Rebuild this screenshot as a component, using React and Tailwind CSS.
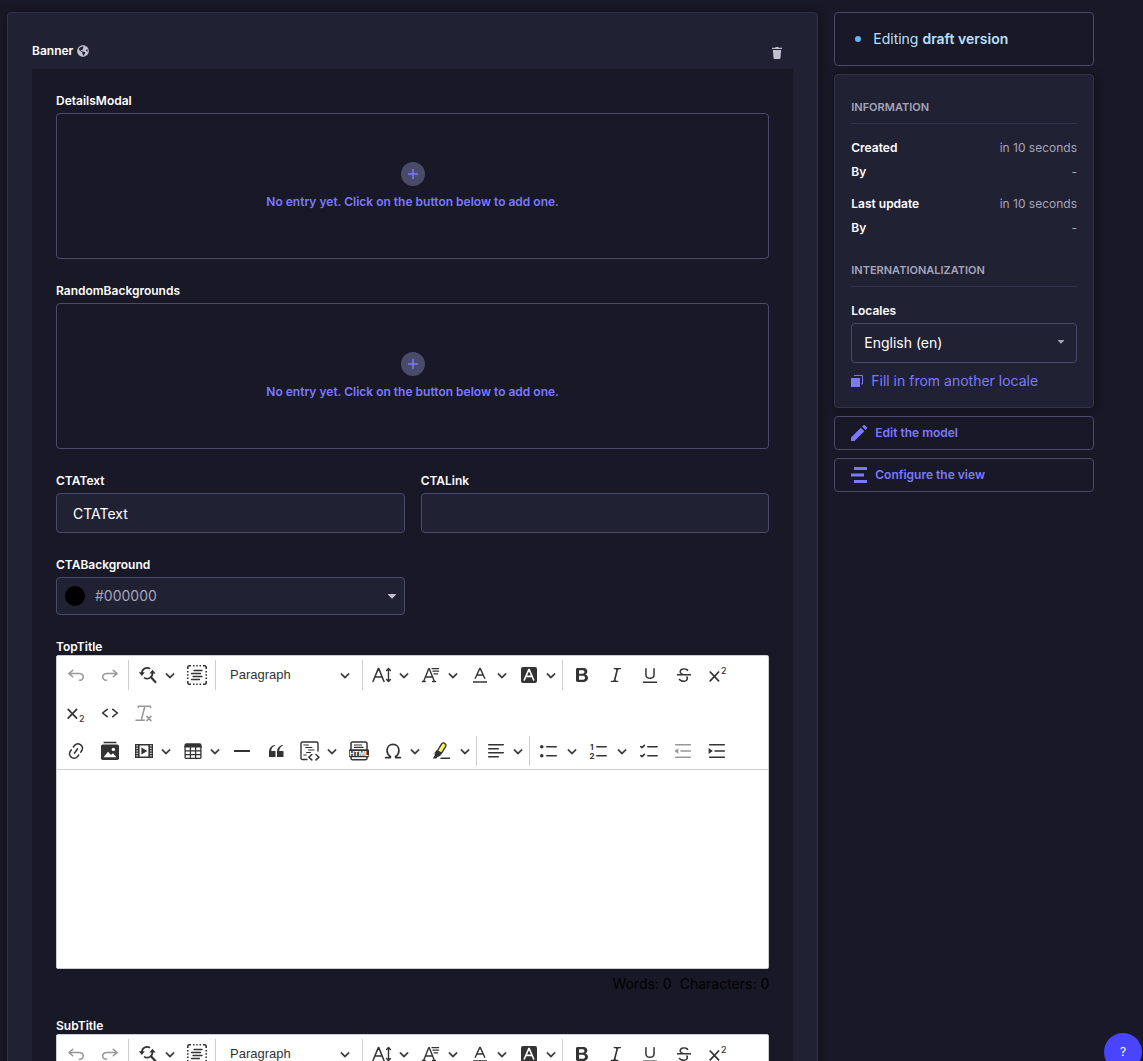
import React, { useId } from "react";
import { FaGlobeAmericas } from "react-icons/fa";

/* ---------- toolbar icons (20 x 20 grid) ---------- */

function Icon({ children }) {
  return (
    <svg viewBox="0 0 20 20" className="size-5 shrink-0" fill="currentColor" aria-hidden="true">
      {children}
    </svg>
  );
}

const line = { fill: "none", stroke: "currentColor", strokeWidth: 1.5, strokeLinecap: "round", strokeLinejoin: "round" };

const icons = {
  undo: <path d="m5.042 9.367 2.189 1.837a.75.75 0 0 1-.965 1.149l-3.788-3.18a.747.747 0 0 1-.21-.284.75.75 0 0 1 .17-.945L6.23 4.762a.75.75 0 1 1 .964 1.15L4.863 7.866h8.917A.75.75 0 0 1 14 7.9a4 4 0 1 1-1.477 7.718l.344-1.489a2.5 2.5 0 1 0 1.094-4.73l.008-.032H5.042z" />,
  redo: <path d="m14.958 9.367-2.189 1.837a.75.75 0 0 0 .965 1.149l3.788-3.18a.747.747 0 0 0 .21-.284.75.75 0 0 0-.17-.945L13.77 4.762a.75.75 0 1 0-.964 1.15l2.331 1.955H6.22A.75.75 0 0 0 6 7.9a4 4 0 1 0 1.477 7.718l-.344-1.489A2.5 2.5 0 1 1 6.039 9.4l-.008-.032h8.927z" />,
  find: (
    <g>
      <path {...line} strokeWidth="1.7" strokeLinecap="butt" d="M3.9 8.4a5.300 5.300 0 0 1 8.200-4.700M14.400 7.600a5.300 5.300 0 0 1-8.400 5" />
      <path {...line} strokeWidth="2.200" d="m13.700 12.900 3.700 4.200" />
      <path d="M.8 7.200h6L3.900 10.900zM11.400 8.600h6.200L14.500 4.800z" />
    </g>
  ),
  selectAll: (
    <g fill="none" stroke="currentColor">
      <path d="M.800 4V2.300A1.500 1.500 0 0 1 2.300.800H4M16 .800h1.700a1.500 1.500 0 0 1 1.500 1.500V4M19.200 16v1.700a1.500 1.500 0 0 1-1.500 1.500H16M4 19.200H2.300a1.500 1.500 0 0 1-1.500-1.500V16" strokeWidth="1.600" />
      <path d="M6 .800h1.500M9.250.800h1.500M12.500.800H14M6 19.200h1.500M9.250 19.200h1.500M12.500 19.200H14M.800 6v1.500M.800 9.250v1.500M.800 12.500V14M19.200 6v1.500M19.200 9.250v1.500M19.200 12.500V14" strokeWidth="1.600" />
      <path d="M7 5.500h8M4.500 8.500h9M6 11.500h9M4.500 14.500h8" strokeWidth="1.300" strokeLinecap="round" />
    </g>
  ),
  fontSize: (
    <g {...line} strokeWidth="1.5">
      <path d="M1 16.500 6.300 3.600h.5L12 16.500M3 12h7.200" />
      <path d="M16.500 4v12M14.600 5.400l1.900-2 1.900 2M14.600 14.600l1.900 2 1.900-2" strokeWidth="1.400" />
    </g>
  ),
  fontFamily: (
    <g {...line} strokeWidth="1.4">
      <path d="M2.600 16.400 7.800 3.600h.4l5.200 12.800M4.400 12h7.400M1.400 16.500h2.800M11.600 16.500h2.800" />
      <path d="M11 3.600h6.600M12 6.200h5.600M13 8.800h3.600" strokeWidth="1.3" />
    </g>
  ),
  fontColor: (
    <g {...line} strokeWidth="1.4">
      <path d="M5.300 13.300 9.800 3.400h.4l4.500 9.900M6.900 10h6.200" />
      <path d="M3 17h14" strokeWidth="1.5" strokeLinecap="butt" />
    </g>
  ),
  fontBackground: (
    <g>
      <rect x="2" y="2" width="16" height="16" rx="2" />
      <path d="M5.300 15 9.800 4.600h.4L14.700 15M6.900 11.400h6.200" fill="none" stroke="#fff" strokeWidth="1.6" strokeLinecap="round" />
    </g>
  ),
  bold: <path d="M10.187 17H5.773c-.637 0-1.092-.138-1.364-.415-.273-.277-.409-.718-.409-1.323V4.738c0-.617.14-1.062.419-1.332.279-.27.73-.406 1.354-.406h4.68c.69 0 1.288.041 1.793.124.506.083.96.242 1.36.478.341.197.644.447.906.75a3.262 3.262 0 0 1 .808 2.162c0 1.401-.722 2.426-2.167 3.075C15.05 10.175 16 11.315 16 13.01a3.756 3.756 0 0 1-2.296 3.504 6.1 6.1 0 0 1-1.517.377c-.571.073-1.238.11-2 .11zm-.217-6.217H7v4.087h3.069c1.977 0 2.965-.69 2.965-2.072 0-.707-.256-1.22-.768-1.537-.512-.319-1.277-.478-2.296-.478zM7 5.13v3.619h2.606c.729 0 1.292-.067 1.69-.2a1.6 1.6 0 0 0 .91-.765c.165-.267.247-.566.247-.897 0-.707-.26-1.176-.778-1.409-.519-.232-1.31-.348-2.375-.348H7z" />,
  italic: <path d="m9.586 14.633.021.004c-.036.335.095.655.393.962.082.083.173.15.274.201h1.474a.6.6 0 1 1 0 1.2H5.304a.6.6 0 0 1 0-1.2h1.15c.474-.07.809-.182 1.005-.334.157-.122.291-.32.404-.597l2.416-9.55a1.053 1.053 0 0 0-.281-.823 1.12 1.12 0 0 0-.442-.296H8.15a.6.6 0 0 1 0-1.2h6.443a.6.6 0 1 1 0 1.2h-1.195c-.376.056-.65.155-.823.296-.215.175-.423.439-.623.79l-2.366 9.347z" />,
  underline: <path d="M3 18v-1.500h14V18zm2.200-8V3.600c0-.4.4-.6.8-.6.3 0 .7.2.7.6v6.200c0 2 1.300 2.800 3.200 2.800 1.900 0 3.400-.9 3.400-2.900V3.600c0-.3.4-.5.8-.5.3 0 .7.2.7.5V10c0 2.700-2.200 4-4.900 4-2.600 0-4.700-1.200-4.700-4z" />,
  strike: (
    <g>
      <path d="M7 16.4c-.8-.4-1.5-.9-2.2-1.5a.6.6 0 0 1-.2-.5l.3-.6h1c1 1.2 2.1 1.7 3.7 1.7 1 0 1.8-.3 2.3-.6.6-.4.6-1.2.6-1.3.2-1.2-.9-2.1-.9-2.1h2.1c.3.7.4 1.2.4 1.7v.8l-.6 1.2c-.6.8-1.1 1-1.6 1.2a6 6 0 0 1-2.4.6c-1 0-1.8-.3-2.5-.6zM6.8 9 6 8.3c-.4-.5-.5-.8-.5-1.6 0-.7.1-1.3.5-1.8.4-.6 1-1 1.6-1.3a6.3 6.3 0 0 1 4.7 0 4 4 0 0 1 1.7 1l.3.7c0 .1.2.4-.2.7-.4.2-.9.1-1 0a3 3 0 0 0-1.2-1c-.4-.2-1-.3-2-.4-.7 0-1.4.2-2 .6-.8.6-1 .8-1 1.5 0 .8.5 1 1.2 1.5.6.4 1.1.7 1.9 1H6.800z" />
      <path d="M3 10.500V9h14v1.500z" />
    </g>
  ),
  superscript: (
    <g>
      <path d="m2.200 7 8.400 8.800M10.600 7l-8.400 8.800" fill="none" stroke="currentColor" strokeWidth="1.700" strokeLinecap="round" />
      <text x="13" y="9" fontSize="9" fontWeight="500" fontFamily="Inter, sans-serif">2</text>
    </g>
  ),
  subscript: (
    <g>
      <path d="m2.200 6.400 8.400 8.800M10.600 6.400l-8.400 8.800" fill="none" stroke="currentColor" strokeWidth="1.700" strokeLinecap="round" />
      <text x="13" y="18.500" fontSize="9" fontWeight="500" fontFamily="Inter, sans-serif">2</text>
    </g>
  ),
  source: (
    <g {...line} strokeWidth="1.600">
      <path d="M7.200 6.300 2.600 10l4.600 3.700M12.800 6.300l4.600 3.700-4.600 3.700" />
    </g>
  ),
  removeFormat: (
    <g {...line} strokeWidth="1.500">
      <path d="M4.300 3.200h12.200M4.300 3.200v1.400M16.500 3.200v1.400M10.900 3.200 7.600 16M2 17.200h8.300" />
      <path d="m12.900 13.400 4 4.200M16.900 13.400l-4 4.200" strokeWidth="1.600" />
    </g>
  ),
  link: <path d="m11.077 15 .991-1.416a.75.75 0 1 1 1.229.86l-1.148 1.64a.748.748 0 0 1-.217.206 5.251 5.251 0 0 1-8.503-5.955.741.741 0 0 1 .12-.274l1.147-1.639a.75.75 0 1 1 1.228.86L4.933 10.7l.006.003a3.75 3.75 0 0 0 6.132 4.294l.006.004zm5.494-5.335a.748.748 0 0 1-.12.274l-1.147 1.639a.75.75 0 1 1-1.228-.86l.86-1.23a3.75 3.75 0 0 0-6.144-4.301l-.86 1.229a.75.75 0 0 1-1.229-.86l1.148-1.64a.748.748 0 0 1 .217-.206 5.251 5.251 0 0 1 8.503 5.955zm-4.563-2.532a.75.75 0 0 1 .184 1.045l-3.155 4.505a.75.75 0 1 1-1.229-.86l3.155-4.506a.75.75 0 0 1 1.045-.184z" />,
  media: (
    <g>
      <path d="M3.600.8h12.800v1.400H3.600z" />
      <rect x="1" y="3.400" width="18" height="15.600" rx="1.800" />
      <path d="m3.600 16.200 4.400-5.400 3 3.200 2-1.800 3.400 4z" fill="#fff" />
      <circle cx="13.400" cy="8.400" r="1.700" fill="#fff" />
    </g>
  ),
  video: (
    <g>
      <path fillRule="evenodd" d="M1 3h18v14H1zm4.600 1.600v10.800h8.800V4.600z" />
      <path d="M3.100 4.300v12M16.900 4.300v12" stroke="#fff" strokeWidth="1.400" strokeDasharray="1.300 1.200" />
      <path d="M7.400 6.500v7l6-3.500z" />
    </g>
  ),
  table: (
    <g>
      <path d="M1.400 4.200a2 2 0 0 1 2-2h13.200a2 2 0 0 1 2 2V6.500H1.400z" />
      <path d="M2.100 5v11.400a1 1 0 0 0 1 1h13.800a1 1 0 0 0 1-1V5M2 9.800h16M2 13.600h16M7.400 6v11.400M12.600 6v11.400" fill="none" stroke="currentColor" strokeWidth="1.300" />
    </g>
  ),
  hr: <path d="M2 9h16v2H2z" />,
  quote: <path d="M3 10.423a6.5 6.5 0 0 1 6.056-6.408l.038.67C6.448 5.423 5.354 7.663 5.22 10H9c.552 0 .5.432.5.986v4.511c0 .554-.448.503-1 .503h-5c-.552 0-.5-.449-.5-1.003v-4.574zm8 0a6.5 6.5 0 0 1 6.056-6.408l.038.67c-2.646.739-3.74 2.979-3.873 5.315H17c.552 0 .5.432.5.986v4.511c0 .554-.448.503-1 .503h-5c-.552 0-.5-.449-.5-1.003v-4.574z" />,
  codeBlock: (
    <g {...line} strokeWidth="1.400">
      <path d="M7 18.500H2.300A1.300 1.300 0 0 1 1 17.200V2.300A1.300 1.300 0 0 1 2.300 1h14.400a1.300 1.300 0 0 1 1.300 1.300V10" />
      <path d="M3.800 4h4.500M5.800 6.500h6M8.500 9h5.500M6.500 11.500h4M3.800 14h2.500" strokeWidth="1.200" />
      <path d="m11.800 13.500-3 2.700 3 2.700M16 13.500l3 2.700-3 2.700" strokeWidth="1.500" />
    </g>
  ),
  html: (
    <g>
      <path d="M2 9V2.600A1.600 1.600 0 0 1 3.600 1h12.800A1.600 1.600 0 0 1 18 2.600V9M2 15.500v1.700a1.600 1.600 0 0 0 1.600 1.600h12.800a1.600 1.600 0 0 0 1.600-1.600v-1.700" fill="none" stroke="currentColor" strokeWidth="1.500" />
      <path d="M5 4h8M5 6.300h9.500" stroke="currentColor" strokeWidth="1.200" />
      <rect x="0" y="8.300" width="20" height="8" rx="1.200" />
      <text x="10" y="14.700" textAnchor="middle" fontSize="6.500" fontWeight="800" fill="#fff" fontFamily="Inter, sans-serif">HTML</text>
    </g>
  ),
  omega: (
    <path {...line} strokeWidth="1.700" d="M2.600 16.600h4.800v-1.200c-2-1.200-3.300-3.200-3.300-5.700 0-3.700 2.500-6.300 5.900-6.300s5.900 2.600 5.900 6.300c0 2.500-1.300 4.500-3.300 5.700v1.200h4.800" />
  ),
  highlight: (
    <g>
      <path d="M9.700 2.800c.6-1 1.700-1.100 2.500-.6l1 .7c.8.500 1 1.500.5 2.400l-4.300 7-4-2.600z" fill="#fdf15c" stroke="currentColor" strokeWidth="1.400" />
      <path d="m4.500 9.300 5.200 3.300-1.600 2.500-2.600.8-1.100 1.700H.700l2-3.200-.2-2.400z" />
      <path d="M9 16.500h9V18H8z" />
    </g>
  ),
  align: <path {...line} d="M2.700 3.800h14.600M2.700 7.800h9.600M2.700 11.800h14.600M2.700 15.800h9.600" />,
  bullets: <path d="M7 5.750c0 .414.336.75.75.75h9.500a.75.75 0 1 0 0-1.500h-9.500a.75.75 0 0 0-.75.75zm-6 0C1 4.784 1.777 4 2.750 4c.966 0 1.750.777 1.750 1.750 0 .966-.777 1.750-1.750 1.750C1.784 7.500 1 6.723 1 5.750zm6 9c0 .414.336.75.75.75h9.500a.75.75 0 1 0 0-1.500h-9.500a.75.75 0 0 0-.75.75zm-6 0c0-.966.777-1.750 1.750-1.750.966 0 1.750.777 1.750 1.750 0 .966-.777 1.750-1.750 1.750-.966 0-1.750-.777-1.750-1.750z" />,
  numbers: (
    <g>
      <path {...line} d="M7.800 5.750h9.400M7.800 14.750h9.400" />
      <text x="1" y="8.500" fontSize="8" fontWeight="700" fontFamily="Inter, sans-serif">1</text>
      <text x="0.500" y="18" fontSize="8" fontWeight="700" fontFamily="Inter, sans-serif">2</text>
    </g>
  ),
  todo: (
    <g {...line}>
      <path d="M8.800 5.750h9.400M8.800 14.750h9.400" />
      <path d="m1.700 5.500 1.300 1.200 2.300-2.300M1.700 14.500l1.300 1.200 2.300-2.300" strokeWidth="1.600" />
    </g>
  ),
  outdent: (
    <g>
      <path {...line} d="M2.700 3.750h14.600M8 10h9.300M2.700 16.250h14.600" />
      <path d="M5.300 7.200v5.600L1.400 10z" />
    </g>
  ),
  indent: (
    <g>
      <path {...line} d="M2.700 3.750h14.600M8 10h9.300M2.700 16.250h14.600" />
      <path d="M1.600 7v6l4.200-3z" />
    </g>
  ),
};

function Chevron({ className = "" }) {
  return (
    <svg viewBox="0 0 10 10" className={`size-2.5 shrink-0 ${className}`} fill="currentColor" stroke="currentColor" strokeWidth="0.3" aria-hidden="true">
      <path d="M.941 4.523a.75.75 0 1 1 1.060-1.060l3.006 3.005 3.005-3.005a.75.75 0 1 1 1.060 1.060l-3.549 3.550a.75.75 0 0 1-1.168-.136L.941 4.523z" />
    </svg>
  );
}

/* ---------- toolbar parts ---------- */

function Tool({ icon, label, disabled }) {
  return (
    <button type="button" aria-label={label} disabled={disabled} className="flex h-[30px] w-[34px] shrink-0 items-center justify-center disabled:opacity-50">
      <Icon>{icons[icon]}</Icon>
    </button>
  );
}

function DropTool({ icon, label }) {
  return (
    <button type="button" aria-label={label} aria-haspopup="true" className="flex h-[30px] w-[49px] shrink-0 items-center pl-[7px]">
      <Icon>{icons[icon]}</Icon>
      <Chevron className="ml-[7px]" />
    </button>
  );
}

function SplitTool({ icon, label }) {
  return (
    <div className="flex h-[30px] w-[50px] shrink-0 items-center">
      <button type="button" aria-label={label} className="flex h-full w-[34px] items-center justify-center">
        <Icon>{icons[icon]}</Icon>
      </button>
      <button type="button" aria-label={`${label} options`} aria-haspopup="true" className="flex h-full w-4 items-center pl-px">
        <Chevron />
      </button>
    </div>
  );
}

function Separator() {
  return <span className="mr-0.5 ml-px h-[30px] w-px shrink-0 bg-[#ccced1]" />;
}

function Toolbar() {
  return (
    <div role="toolbar" aria-label="Editor toolbar" className="border-b border-[#ccced1] pl-0.5 text-[#333]">
      <div className="flex h-[38px] items-center">
        <Tool icon="undo" label="Undo" disabled />
        <Tool icon="redo" label="Redo" disabled />
        <Separator />
        <DropTool icon="find" label="Find and replace" />
        <Tool icon="selectAll" label="Select all" />
        <Separator />
        <div className="relative w-[143px] shrink-0">
          <select aria-label="Heading" className="h-[30px] w-full appearance-none bg-transparent pl-3 font-['Liberation_Sans',sans-serif] text-[13px] outline-none">
            <option>Paragraph</option>
          </select>
          <Chevron className="pointer-events-none absolute top-2.5 right-[11px]" />
        </div>
        <Separator />
        <DropTool icon="fontSize" label="Font size" />
        <DropTool icon="fontFamily" label="Font family" />
        <DropTool icon="fontColor" label="Font color" />
        <DropTool icon="fontBackground" label="Font background color" />
        <Separator />
        <Tool icon="bold" label="Bold" />
        <Tool icon="italic" label="Italic" />
        <Tool icon="underline" label="Underline" />
        <Tool icon="strike" label="Strikethrough" />
        <Tool icon="superscript" label="Superscript" />
      </div>
      <div className="flex h-[38px] items-center">
        <Tool icon="subscript" label="Subscript" />
        <Tool icon="source" label="Source" />
        <Tool icon="removeFormat" label="Remove format" disabled />
      </div>
      <div className="flex h-[37px] items-center">
        <Tool icon="link" label="Link" />
        <Tool icon="media" label="Media library" />
        <DropTool icon="video" label="Insert media" />
        <DropTool icon="table" label="Insert table" />
        <Tool icon="hr" label="Horizontal line" />
        <Tool icon="quote" label="Block quote" />
        <DropTool icon="codeBlock" label="Insert code block" />
        <Tool icon="html" label="Insert HTML" />
        <DropTool icon="omega" label="Special characters" />
        <SplitTool icon="highlight" label="Highlight" />
        <Separator />
        <DropTool icon="align" label="Text alignment" />
        <Separator />
        <SplitTool icon="bullets" label="Bulleted list" />
        <SplitTool icon="numbers" label="Numbered list" />
        <Tool icon="todo" label="To-do list" />
        <Tool icon="outdent" label="Decrease indent" disabled />
        <Tool icon="indent" label="Increase indent" />
      </div>
    </div>
  );
}

/* ---------- form fields ---------- */

const labelClass = "block text-xs font-semibold leading-4 text-white";

function RichText({ label }) {
  const id = useId();
  return (
    <div>
      <label htmlFor={id} className={labelClass}>{label}</label>
      <div className="overflow-hidden rounded-xs border border-[#ccced1] bg-white">
        <Toolbar />
        <textarea id={id} className="block h-[198px] w-full resize-none bg-white p-3 text-sm text-black outline-none" />
      </div>
      <p className="mt-[5px] flex justify-end gap-2 text-sm leading-5 text-black">
        <span>Words: 0</span>
        <span>Characters: 0</span>
      </p>
    </div>
  );
}

function EmptyComponent({ label }) {
  return (
    <div>
      <span className={labelClass}>{label}</span>
      <button type="button" className="mt-1 flex h-[146px] w-full flex-col items-center justify-center gap-2 rounded border border-[#4a4a6a] text-[#7b79ff]">
        <span className="flex size-6 items-center justify-center rounded-full bg-[#4a4a6a]">
          <svg viewBox="0 0 10 10" className="size-2.5" stroke="currentColor" strokeWidth="1.5" aria-hidden="true">
            <path d="M5 0v10M0 5h10" />
          </svg>
        </span>
        <span className="text-xs font-semibold leading-4">No entry yet. Click on the button below to add one.</span>
      </button>
    </div>
  );
}

function TextField({ label, value }) {
  const id = useId();
  return (
    <div>
      <label htmlFor={id} className={labelClass}>{label}</label>
      <input id={id} type="text" defaultValue={value} className="mt-1 block h-10 w-full rounded border border-[#4a4a6a] bg-[#212134] px-4 text-sm text-white outline-none" />
    </div>
  );
}

function Caret({ className }) {
  return (
    <svg viewBox="0 0 8 5" className={className} fill="currentColor" aria-hidden="true">
      <path d="M.4 0h7.200a.4.4 0 0 1 .3.700L4.400 4.400a.6.6 0 0 1-.8 0L.1.700A.4.4 0 0 1 .4 0z" />
    </svg>
  );
}

function ColorField({ label, value }) {
  const id = useId();
  return (
    <div>
      <label htmlFor={id} className={labelClass}>{label}</label>
      <button id={id} type="button" aria-haspopup="dialog" className="mt-1 flex h-[38px] w-full items-center gap-2.5 rounded border border-[#4a4a6a] bg-[#212134] px-2 text-sm text-[#a5a5ba]">
        <span className="size-5 rounded-full bg-black" />
        <span>{value}</span>
        <Caret className="ml-auto h-[5px] w-2 text-[#c0c0cf]" />
      </button>
    </div>
  );
}

/* ---------- sidebar ---------- */

function InfoRow({ name, value }) {
  return (
    <div className="flex justify-between text-xs leading-4">
      <dt className="font-semibold text-white">{name}</dt>
      <dd className="text-[#a5a5ba]">{value}</dd>
    </div>
  );
}

function SectionTitle({ children }) {
  return <h2 className="border-b border-[#32324d] pb-2 text-[11px] font-semibold leading-4 text-[#a5a5ba] uppercase">{children}</h2>;
}

function SideButton({ icon, children }) {
  return (
    <button type="button" className="flex h-[34px] w-full items-center gap-2 rounded border border-[#4a4a6a] px-4 text-xs font-semibold text-[#7b79ff]">
      {icon}
      {children}
    </button>
  );
}

function Sidebar() {
  return (
    <aside className="col-span-3 flex flex-col gap-2">
      <div className="flex h-[54px] items-center gap-3 rounded border border-[#4a4a6a] px-5 text-sm text-[#b8e1ff]">
        <span className="size-1.5 rounded-full bg-[#66b7f1]" />
        <p>Editing <strong className="font-semibold">draft version</strong></p>
      </div>
      <section className="rounded border border-[#32324d] bg-[#212134] px-4 pt-6 pb-4 shadow-[1px_1px_10px_rgba(3,3,5,0.35)]">
        <SectionTitle>Information</SectionTitle>
        <dl className="mt-4 flex flex-col gap-2">
          <InfoRow name="Created" value="in 10 seconds" />
          <InfoRow name="By" value="-" />
        </dl>
        <dl className="mt-4 mb-[26px] flex flex-col gap-2">
          <InfoRow name="Last update" value="in 10 seconds" />
          <InfoRow name="By" value="-" />
        </dl>
        <SectionTitle>Internationalization</SectionTitle>
        <label htmlFor="locale" className={`mt-4 ${labelClass}`}>Locales</label>
        <div className="relative mt-1">
          <select id="locale" className="h-10 w-full appearance-none rounded border border-[#4a4a6a] bg-[#212134] px-3 text-sm text-white outline-none">
            <option>English (en)</option>
          </select>
          <Caret className="pointer-events-none absolute top-[17px] right-3 h-1 w-2 text-[#a5a5ba]" />
        </div>
        <button type="button" className="mt-2 flex items-center gap-2 text-sm leading-5 text-[#7b79ff]">
          <svg viewBox="0 0 12 12" className="size-3" aria-hidden="true">
            <path d="M0 3h9v9H0z" fill="currentColor" />
            <path d="M3 .5h8.500v8.500H10" fill="none" stroke="currentColor" />
          </svg>
          Fill in from another locale
        </button>
      </section>
      <SideButton
        icon={
          <svg viewBox="0 0 16 16" className="size-4" fill="currentColor" aria-hidden="true">
            <path d="M9.800 2.700 13.300 6.200 3.500 16H0v-3.500zM11 1.500 12.200.4a1.200 1.200 0 0 1 1.700 0l1.700 1.700a1.200 1.200 0 0 1 0 1.700L14.500 5z" />
          </svg>
        }
      >
        Edit the model
      </SideButton>
      <SideButton
        icon={
          <svg viewBox="0 0 16 16" className="size-4" fill="currentColor" aria-hidden="true">
            <path d="M3 0h13v3H3zM0 6.500h13v3H0zM3 13h13v3H3z" />
          </svg>
        }
      >
        Configure the view
      </SideButton>
    </aside>
  );
}

export default function App() {
  return (
    <div className="h-screen overflow-hidden bg-[#181826] pt-3 pr-[49px] pl-[7px] font-['Inter',sans-serif] antialiased">
      <div className="grid grid-cols-12 items-start gap-4">
        <main className="col-span-9 rounded border border-[#32324d] bg-[#212134] p-6 shadow-[1px_1px_10px_rgba(3,3,5,0.35)]">
          <header className="flex h-8 items-center justify-between">
            <h1 className="flex items-center gap-1 pb-1 text-xs font-semibold leading-4 text-white">
              Banner
              <FaGlobeAmericas className="size-3 text-[#c0c0cf]" aria-hidden="true" />
            </h1>
            <button type="button" aria-label="Delete Banner" className="flex h-8 w-8 items-center justify-center text-[#c0c0cf]">
              <svg viewBox="0 0 10 12" className="h-3 w-2.5" fill="currentColor" aria-hidden="true">
                <path d="M3.500 0h3v.8H10v1.300H0V.8h3.500zM.8 3h8.400l-.8 8.300a.8.8 0 0 1-.8.7H2.400a.8.8 0 0 1-.8-.7z" />
              </svg>
            </button>
          </header>
          <div className="flex flex-col gap-6 bg-[#181826] p-6">
            <EmptyComponent label="DetailsModal" />
            <EmptyComponent label="RandomBackgrounds" />
            <div className="grid grid-cols-2 gap-x-4 gap-y-6">
              <TextField label="CTAText" value="CTAText" />
              <TextField label="CTALink" value="" />
              <ColorField label="CTABackground" value="#000000" />
            </div>
            <RichText label="TopTitle" />
            <RichText label="SubTitle" />
          </div>
        </main>
        <Sidebar />
      </div>
      <button type="button" aria-label="Help" className="fixed right-px -bottom-2.5 flex size-[38px] items-center justify-center rounded-full bg-[#4945ff] text-xs text-white">
        ?
      </button>
    </div>
  );
}
